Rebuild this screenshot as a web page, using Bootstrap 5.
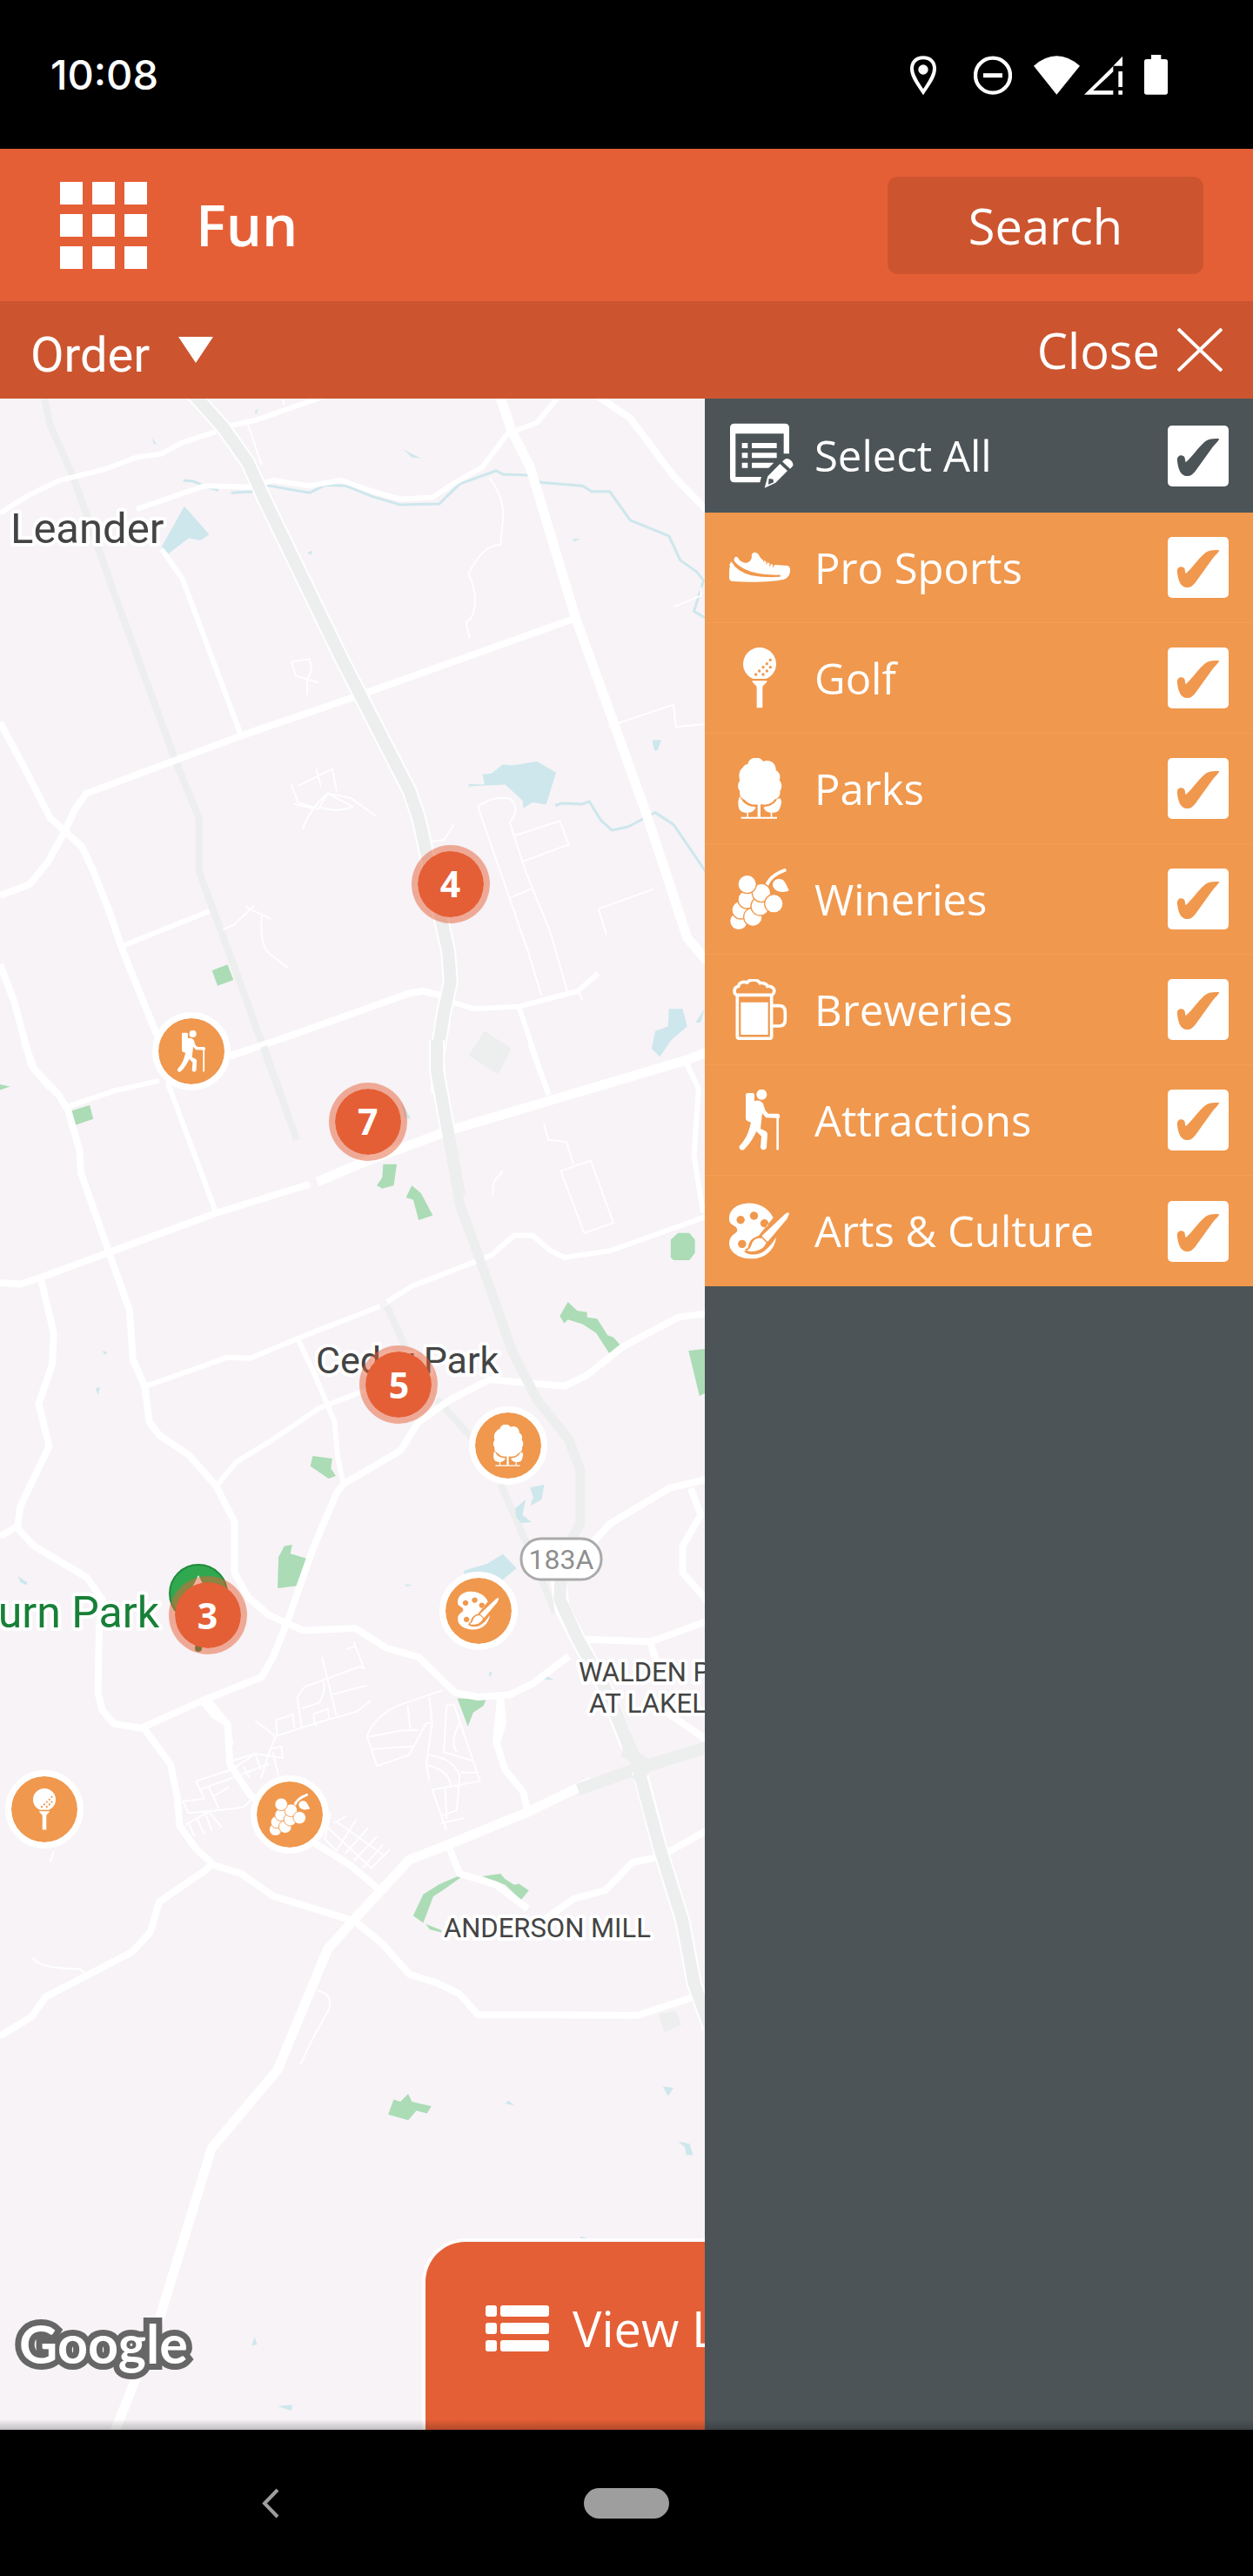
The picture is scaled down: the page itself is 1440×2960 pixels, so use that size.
<!DOCTYPE html>
<html lang="en">
<head>
<meta charset="utf-8">
<meta name="viewport" content="width=device-width, initial-scale=1">
<title>Fun</title>
<link href="https://cdn.jsdelivr.net/npm/bootstrap@5.3.0/dist/css/bootstrap.min.css" rel="stylesheet">
<style>
  :root { --brand:#e55f36; --brand-dark:#cc552f; --slate:#4c5457; --amber:#f0984d; }
  body { font-family:"Open Sans","Noto Sans",sans-serif; background:#000; color:#fff; }
  .status-bar { height:171px; padding:0 98px 0 58px; }
  .clock { font:500 47px/1 Inter,Roboto,sans-serif; }
  .app-bar { height:175px; background:var(--brand); padding:0 57px 0 69px; }
  .app-title { font-size:65px; font-weight:600; line-height:1; }
  .plain-btn { background:none; border:0; padding:0; color:inherit; line-height:1; }
  .search-btn { width:363px; height:112px; background:var(--brand-dark); color:#fff; font-size:56px; line-height:1; border:0; border-radius:12px; }
  .search-btn:hover { background:#b94b28; color:#fff; }
  .sub-bar { height:112px; background:var(--brand-dark); padding:0 35px; font-size:56px; }
  .order-select { appearance:none; background:none; border:0; color:#fff; padding:14px 0 0; font:400 56px/1.2 Roboto,sans-serif; }
  .order-group { gap:32px; }
  .close-btn { gap:20px; }
  .main-area::after { content:""; position:absolute; left:0; right:0; bottom:0; height:12px; background:linear-gradient(transparent,rgba(0,0,0,.22)); pointer-events:none; }
  .map-pane { background:#f7f3f7; min-width:0; }
  .map-pane > svg { width:100%; height:100%; position:absolute; inset:0; }
  .roads path, .gray-roads path, .water-lines path { fill:none; stroke:#fff; stroke-linejoin:round; vector-effect:non-scaling-stroke; }
  .roads .r1 { stroke-width:11px; } .roads .r2 { stroke-width:8px; } .roads .r3 { stroke-width:6px; } .roads .r4 { stroke-width:2px; }
  .gray-roads path { stroke:#edeeee; stroke-width:8px; }
  .gray-roads .casing { stroke:#fff; stroke-width:18px; }
  .gray-roads .wide { stroke-width:14px; }
  .gray-roads .medium { stroke-width:11px; }
  .water-lines path { stroke:#cde7ec; stroke-width:3px; }
  .green-area { fill:#abdcb5; } .water-area { fill:#cde7ec; } .gray-area { fill:#edeeee; }
  .map-label { font-family:Roboto,sans-serif; fill:#444; stroke:#fff; stroke-width:8px; stroke-linejoin:round; paint-order:stroke; }
  .t-town { font-size:49px; } .t-city { font-size:43px; } .t-area { font-size:31px; }
  .t-park { font-size:50px; fill:#188038; }
  .t-route { font-family:Roboto,sans-serif; font-size:32px; fill:#8f8f8f; }
  .t-logo { font:700 61px Lato,sans-serif; fill:#fff; stroke:#666; stroke-width:14px; paint-order:stroke; }
  .pin { position:absolute; width:90px; height:90px; border-radius:50%; border:7px solid #fff; background:var(--amber) padding-box; color:#fff; padding:0; transform:translate(-50%,-50%); display:flex; align-items:center; justify-content:center; }
  .pin svg { width:48px; height:48px; }
  .pin-group { border-color:rgba(229,95,54,.5); background:var(--brand) padding-box; font-size:41px; font-weight:700; line-height:1; }
  .view-btn { position:absolute; left:485px; bottom:0; width:470px; height:220px; border:4px solid #fff; border-bottom:0; border-radius:50px 50px 0 0; background:var(--brand); color:#fff; font-size:56px; line-height:1; padding:0 0 18px 69px; gap:27px; white-space:nowrap; }
  .filter-panel { width:43.75%; background:var(--slate); }
  .filter-row { height:127px; padding:0 28px; gap:28px; font-size:49px; line-height:1; background:var(--amber); color:#fff; border:0; border-bottom:2px solid #f39f57; border-radius:0; }
  .filter-row:last-child { border-bottom-color:var(--amber); }
  .filter-all { height:131px; background:var(--slate); border:0; }
  .filter-row svg { width:70px; height:70px; overflow:visible; flex:none; }
  .filter-row .form-check-input { width:70px; height:70px; margin:0 0 0 auto; float:none; border:0; border-radius:5px; background-color:#fff; background-size:70px; flex:none; }
  .filter-row .form-check-input:checked { background-color:#fff; background-image:url("data:image/svg+xml,%3Csvg xmlns='http://www.w3.org/2000/svg' viewBox='0 0 70 70'%3E%3Cpath fill='%23f0984d' d='M11 41C10 36 14 33 18 35C21 37 19 40 21 42C28 36 38 21 45 17C49 15 54 15 59 15C59 18 54 21 50 27L32 52C28 57 26 58 22 58C15 58 12 50 11 41Z'/%3E%3C/svg%3E"); }
  .filter-all .form-check-input:checked { background-image:url("data:image/svg+xml,%3Csvg xmlns='http://www.w3.org/2000/svg' viewBox='0 0 70 70'%3E%3Cpath fill='%234c5457' d='M11 41C10 36 14 33 18 35C21 37 19 40 21 42C28 36 38 21 45 17C49 15 54 15 59 15C59 18 54 21 50 27L32 52C28 57 26 58 22 58C15 58 12 50 11 41Z'/%3E%3C/svg%3E"); }
  .nav-keys { height:168px; padding:0 106px; }
  .home-pill { width:98px; height:35px; border-radius:18px; background:#9e9e9e; }
</style>
<script src="https://cdn.jsdelivr.net/npm/bootstrap@5.3.0/dist/js/bootstrap.bundle.min.js"></script>
</head>
<body class="d-flex flex-column min-vh-100">

<!-- Category icons -->
<svg class="d-none" aria-hidden="true">
  <symbol id="i-shoe" viewBox="54 442 210 210">
    <path fill="#fff" d="M55 541C56 534 59 530 64 527C72 545 92 562 128 570C160 577 200 579 232 577C205 585 150 582 115 571C85 562 68 548 60 540ZM74 512C79 508 85 513 88 519C92 525 104 532 115 531C124 529 130 522 132 511C129 501 136 494 144 495C154 497 158 508 165 517L172 522L170 530L175 524L182 527L181 539L187 530L193 533L193 546L199 535L204 537L205 549L210 538L255 541C263 543 265 551 264 562C261 577 254 585 240 589C205 597 130 600 62 594C53 592 53 580 54 568C55 555 54 545 60 536C80 558 110 573 150 577C190 581 215 581 232 575C200 572 160 571 128 561C100 552 75 535 70 521Z"/>
    <path d="M66 527C78 550 100 564 132 571C165 577 200 578 230 576" stroke="#f0984d" stroke-width="7" fill="none"/>
  </symbol>
  <symbol id="i-golf" viewBox="54 823 210 210">
    <path fill="#fff" d="M137 931C116 923 102 903 102 880A57 57 0 0 1 216 880C216 903 202 923 181 931ZM133 938H185C184 947 169 952 169 962V1031H149V962C149 952 134 947 133 938Z"/>
    <g fill="#f0984d"><circle cx="196" cy="866" r="5"/><circle cx="184" cy="879" r="5"/><circle cx="171" cy="891" r="5"/><circle cx="158" cy="904" r="5"/><circle cx="146" cy="916" r="5"/><circle cx="196" cy="891" r="5"/><circle cx="184" cy="904" r="5"/><circle cx="171" cy="916" r="5"/></g>
  </symbol>
  <symbol id="i-tree" viewBox="54 1204 210 210">
    <path fill="#fff" d="M118 1225C122 1198 160 1196 171 1216C190 1206 217 1219 215 1246C229 1254 232 1268 227 1280C237 1292 237 1308 229 1318C232 1334 222 1345 210 1347C203 1360 187 1366 162 1364V1407H219V1413H95V1407H152V1364C133 1367 117 1360 108 1348C94 1344 88 1330 91 1318C82 1308 82 1292 91 1282C84 1262 91 1243 101 1237C104 1230 110 1227 118 1225ZM91 1336C98 1353 108 1363 122 1368C130 1372 141 1370 146 1374C142 1384 133 1391 120 1392V1408H115V1392C98 1393 88 1384 87 1374C83 1361 85 1346 91 1336ZM229 1343C237 1350 234 1362 230 1372C229 1386 216 1394 202 1392V1408H197V1392C184 1391 175 1384 173 1374C181 1369 190 1372 199 1366C212 1360 218 1350 218 1346Z"/>
  </symbol>
  <symbol id="i-grapes" viewBox="54 85 210 210">
    <path d="M181 150C187 126 210 104 245 91" stroke="#fff" stroke-width="12" stroke-linecap="round" fill="none"/>
    <path fill="#fff" d="M204 139C207 122 227 117 240 125C248 133 255 148 260 161C247 168 225 168 213 158C207 153 204 146 204 139Z"/>
    <g fill="#fff" stroke="#f0984d" stroke-width="4"><circle cx="87" cy="266" r="31"/><circle cx="94" cy="228" r="31"/><circle cx="115" cy="192" r="31"/><circle cx="136" cy="252" r="32"/><circle cx="161" cy="215" r="32"/><circle cx="165" cy="169" r="32"/><circle cx="116" cy="139" r="32"/><circle cx="208" cy="206" r="32"/></g>
  </symbol>
  <symbol id="i-beer" viewBox="54 466 210 210">
    <path d="M82 522V663Q82 671 90 671H192Q200 671 200 663V522M82 521H200M82 522C68 517 68 495 86 491C88 478 102 473 116 478C124 466 152 465 160 480C172 478 184 483 186 491C204 489 216 504 205 518L200 523M204 558H226Q247 558 247 580V607Q247 628 226 628H204" fill="none" stroke="#fff" stroke-width="11"/>
    <path d="M94 546H188V658H94Z" fill="#fff"/>
  </symbol>
  <symbol id="i-hiker" viewBox="54 847 210 210">
    <circle cx="166" cy="864" r="18" fill="#fff"/>
    <path fill="#fff" d="M117 859H136Q141 859 141 865V887C152 882 166 886 171 896L179 920L189 930H221C228 930 230 936 228 944L225 947V1053Q221 1058 217 1053V945L181 944L168 929L162 982L180 990Q186 994 186 1001L183 1046C182 1058 163 1058 162 1046L165 1008L148 991C138 1011 129 1030 106 1053C96 1061 84 1050 90 1041C110 1018 120 1000 129 960L116 955Q111 952 111 946V865Q111 859 117 859Z"/>
  </symbol>
  <symbol id="i-art" viewBox="54 1228 210 210">
    <path fill="#fff" fill-rule="evenodd" d="M206 1286C190 1252 155 1234 115 1236C77 1238 50 1262 54 1295C58 1315 82 1310 82 1331C78 1342 56 1345 54 1372C53 1402 86 1427 130 1427C177 1428 210 1398 216 1354C201 1375 187 1396 164 1407C143 1416 113 1413 105 1401C119 1400 119 1385 123 1374C129 1360 140 1353 155 1349ZM93 1279a14 14 0 1 0 1 0ZM139 1265a14 14 0 1 0 1 0ZM175 1291a14 14 0 1 0 1 0ZM98 1362a14 14 0 1 0 1 0Z"/>
    <path d="M165 1346L245 1271C252 1265 266 1263 263 1274L255 1292L190 1368L183 1375C174 1395 150 1408 123 1404C117 1404 110 1399 113 1395C128 1394 126 1378 133 1368C140 1357 151 1352 163 1354Z" fill="#fff" stroke="#f0984d" stroke-width="5"/>
    <path d="M161 1347L186 1372" stroke="#f0984d" stroke-width="5"/>
  </symbol>
</svg>

<header class="status-bar d-flex align-items-center flex-shrink-0">
  <span class="clock me-auto">10:08</span>
  <svg width="30" height="46" viewBox="78 66 90 138" style="margin-right:43px"><path d="M123 76C98 76 84 92 84 114C84 142 108 170 123 194C138 170 162 142 162 114C162 92 148 76 123 76Z" fill="none" stroke="#fff" stroke-width="12"/><circle cx="123" cy="117" r="17" fill="#fff"/></svg>
  <svg width="44" height="46" viewBox="297 66 132 138" style="margin-right:25px"><circle cx="363" cy="137" r="60" fill="none" stroke="#fff" stroke-width="13"/><path d="M330 137h66" stroke="#fff" stroke-width="15"/></svg>
  <svg width="53" height="46" viewBox="504 66 159 138" style="margin-right:5px"><path d="M504 104Q583 36 663 104L583 203Z" fill="#fff"/></svg>
  <svg width="44" height="46" viewBox="677 66 132 138" style="margin-right:25px"><path d="M809 71V104H777ZM777 105V124L708 189H777V203H677ZM795 123h14v54h-14ZM795 189h14v14h-14Z" fill="#fff"/></svg>
  <svg width="27" height="46" viewBox="885 66 81 138"><path d="M909 66h34v15h15q8 0 8 8v106q0 8-8 8h-65q-8 0-8-8V89q0-8 8-8h16Z" fill="#fff"/></svg>
</header>

<nav class="app-bar d-flex align-items-center flex-shrink-0">
  <button class="plain-btn" type="button" aria-label="Menu">
    <svg class="d-block" width="100" height="100" viewBox="0 0 100 100" fill="#fff"><path d="M0 0h26v26H0ZM37 0h26v26H37ZM74 0h26v26H74ZM0 37h26v26H0ZM37 37h26v26H37ZM74 37h26v26H74ZM0 74h26v26H0ZM37 74h26v26H37ZM74 74h26v26H74Z"/></svg>
  </button>
  <h1 class="app-title mb-0 ms-5 ps-2">Fun</h1>
  <button class="btn search-btn ms-auto" type="button">Search</button>
</nav>

<div class="sub-bar d-flex align-items-center justify-content-between flex-shrink-0">
  <div class="order-group d-flex align-items-center">
    <select class="order-select" aria-label="Order"><option>Order</option></select>
    <svg width="40" height="30" viewBox="0 0 40 30"><path d="M0 0H40L20 30Z" fill="#fff"/></svg>
  </div>
  <button class="plain-btn close-btn d-flex align-items-center" type="button">Close
    <svg width="52" height="50" viewBox="0 0 52 50"><path d="M1 1L51 49M51 1L1 49" stroke="#fff" stroke-width="4"/></svg>
  </button>
</div>

<main class="main-area d-flex flex-grow-1 position-relative">
  <section class="map-pane flex-grow-1 position-relative overflow-hidden" aria-label="Map">
    <svg viewBox="0 0 810 2334" preserveAspectRatio="xMidYMid slice">
      <!-- northern tile -->
      <g transform="translate(0,-8) scale(.523,.5102)">
        <g class="gray-roads"><path d="M95 0L110 75L160 190L260 480L385 830L437 960V1080L520 1310L615 1580"/></g>
        <path class="water-area" d="M405 258L460 322L440 335L415 330L370 365L355 350ZM1030 889V884L1065 885L1060 862L1080 860L1105 840L1125 842L1180 833L1222 858L1200 930L1170 925L1150 938L1148 920L1110 885ZM1470 1390H1500L1510 1430L1475 1460L1450 1498L1432 1480L1440 1440L1468 1430ZM885 128L900 138L925 150L905 148ZM1433 785H1453L1445 808H1438ZM1258 332L1275 331L1262 338ZM335 105L345 120L337 115ZM560 45L567 38L563 52ZM675 363L685 358V368ZM1548 1390L1528 1422L1540 1420Z"/>
        <g class="water-lines"><path d="M403 200L425 202L455 215L480 222M508 228L560 225L580 210L680 228L715 210L760 212L820 237L880 255L965 253L1010 208L1090 178L1105 186L1160 188L1190 205L1280 212L1300 225H1340L1385 290L1470 325L1495 380L1530 405L1546 425L1525 495L1560 516M1220 932L1235 927L1280 929L1295 923L1320 965L1345 988L1380 980L1440 948L1480 975L1560 1095"/></g>
        <path class="green-area" d="M466 1304L500 1290L513 1325L478 1338Z"/>
        <path class="gray-area" d="M1065 1440L1123 1480L1095 1538L1030 1495Z"/>
        <g class="roads">
          <path class="r3" d="M0 274L60 235L130 200L230 175L300 148L355 140L400 115L475 90M500 78L560 65L720 8"/>
          <path class="r3" d="M300 265L450 212L550 215L600 200L680 212L750 200L820 225L880 242L950 238L1000 205L1060 170L1115 95L1180 70L1230 8"/>
          <path class="r3" d="M355 355L400 420L530 775M270 1248L460 1170"/>
          <path class="r1" d="M1095 0L1125 90L1165 170L1265 510L1350 750L1420 950L1510 1230L1560 1290"/>
          <path class="r2" d="M1310 8L1385 60L1480 190L1560 275"/>
          <path class="r2" d="M1265 510L800 680L530 775L190 905L165 940L140 995L105 1060L65 1110L0 1135M0 745L50 840L110 960L180 1025L205 1080L240 1170L270 1260L345 1450"/>
          <path class="r2" d="M0 1290L30 1370L70 1520L110 1568M505 1497L640 1450L790 1395L900 1355L930 1350L970 1360"/>
          <path class="r3" d="M995 1375L1040 1390L1140 1385L1270 1350L1315 1310M1140 1385L1205 1585"/>
          <path class="r4" d="M540 60L575 165M620 15L625 30M1075 195Q1110 240 1105 290L1100 345Q1060 345 1030 410Q1055 470 1035 510L1024 520L1032 555M640 608L680 602L685 625L675 650V683M640 608L650 640L700 655M1335 755L1480 705L1485 755L1560 748M1480 485L1540 460V440M640 885L655 925L700 940L720 905L770 915L825 955M655 888L730 850L740 900M695 848L705 890M665 985Q680 940 720 905M700 935Q740 950 775 935L720 905M645 928L690 940M1190 1360L1160 1260L1050 935Q1080 910 1120 916Q1145 940 1120 970L1155 1080L1210 1220L1248 1355M1130 1000L1230 967L1250 1020L1150 1058M1120 1140L1168 1120M1315 1165L1437 1120M1315 1165L1333 1224M945 1013L975 1010L998 975M490 1212L515 1200L558 1158M540 1160L595 1188M575 1180Q570 1250 595 1268L633 1298M1270 1350L1280 1370"/>
        </g>
        <g class="gray-roads">
          <path class="casing" d="M420 0L490 80L545 160L580 240L750 600L900 900L920 960L935 1030L985 1260L990 1330L975 1400L960 1500L965 1580"/>
          <path class="wide" d="M420 0L490 80L545 160L580 240L750 600L900 900L920 960L935 1030L985 1260L990 1330L975 1400L960 1500L965 1580"/>
        </g>
      </g>
      <!-- central tile -->
      <g transform="translate(0,742) scale(.523,.5102)">
        <g class="gray-roads"><path d="M578 0L652 215M850 590L890 680M960 800L1040 890M1100 990L1160 1130L1220 1280"/></g>
        <path class="green-area" d="M150 152L197 137L205 168L163 183ZM0 90L22 95L0 103ZM842 270H872L865 318L840 325L828 318L840 300ZM905 318L925 335L951 385L920 396L908 350L892 345ZM1490 425H1515L1527 440V470L1515 486H1480L1474 480V440ZM1248 580L1268 600L1290 603V615L1312 618L1335 655L1348 660L1367 682L1340 698L1310 650L1280 630L1248 620L1240 628L1230 612ZM1513 690L1560 685V780L1537 792ZM687 927L730 933L727 955L738 972L722 978L682 950ZM625 1130L642 1127L638 1147L680 1160L662 1218L610 1225L612 1155ZM1005 1473L1068 1476L1062 1490L1040 1505L1028 1536Z"/>
        <path class="water-area" d="M1165 998L1196 992L1190 1025L1165 1040L1172 1020ZM1132 1045L1155 1025L1148 1060L1168 1076L1145 1078L1134 1065ZM1020 1185L1070 1170L1105 1148L1135 1180L1100 1210L1020 1200ZM40 1198L60 1212L58 1218L45 1212ZM1075 1412L1082 1416L1075 1426ZM1195 1420L1218 1432L1190 1430ZM225 690L236 694L230 699ZM210 775L220 772L215 790ZM888 1216L905 1217L895 1221ZM880 125L903 168L890 165Z"/>
        <g class="roads">
          <path class="r2" d="M53 -5L75 55L130 115L150 150L175 240L178 290L240 470L285 600L292 710L318 770L328 850L350 880L415 925L475 995L515 1075V1190L545 1245L590 1285L665 1320L780 1315L850 1360L920 1380L1000 1460L1050 1470L1120 1465L1170 1440L1250 1378"/>
          <path class="r3" d="M150 140L250 105L350 82M368 85L475 380M505 24L600 -8"/>
          <path class="r2" d="M0 537L45 540L90 525L475 380L680 315"/>
          <path class="r1" d="M697 310L800 265L1000 190L1510 35L1560 15"/>
          <path class="r2" d="M90 530L118 650L115 720L85 810L108 905L45 1040L38 1090L75 1130L190 1200L225 1250L218 1310L215 1460L225 1500L250 1530L310 1540L445 1478L575 1425L600 1380L635 1290L690 1130L740 1010L755 990L880 915L920 850L990 800L1075 755L1240 770L1290 745L1370 680L1490 615L1560 605M0 1108L40 1085"/>
          <path class="r3" d="M320 770L500 705L550 707L660 660L835 590M850 580L905 545L1080 475L1130 430H1170L1210 465L1240 480L1340 465L1560 385M655 665L690 740L735 850L742 930L755 990M475 995L520 940L600 890L700 820L800 780M1165 0L1205 110M1505 35L1535 100L1525 250L1545 380"/>
          <path class="r2" d="M1300 1125L1340 1080L1470 1000L1560 978M1518 1000L1540 1060L1500 1130V1190L1560 1260M1285 1340L1430 1345L1560 1297M1430 1350L1445 1400M1100 1470L1105 1530L1090 1580M445 1478L470 1510L500 1530L505 1580"/>
          <path class="r4" d="M1195 180L1205 215L1245 220L1260 270M1232 285L1298 262L1348 402L1284 425ZM1105 285L1085 310L1082 340"/>
        </g>
        <g class="gray-roads">
          <path class="casing" d="M960 -10V60L985 200"/>
          <path class="wide" d="M960 -10V60L985 200L1010 340"/>
          <path class="casing" d="M1225 1190L1235 1270L1270 1340L1330 1450L1380 1580"/>
          <path class="medium" d="M985 200L1010 360L1060 500L1125 690L1180 800L1250 890L1275 960L1275 1080L1235 1150L1230 1250"/>
          <path class="wide" d="M1235 1140L1230 1250L1270 1340L1330 1450L1385 1590"/>
        </g>
      </g>
      <!-- southern tile -->
      <g transform="translate(0,1492) scale(.523,.6441)">
        <path class="green-area" d="M1012 318L965 334L930 352L908 390L930 403L952 356L978 342L1012 322ZM935 405L970 416V420L945 415ZM1060 320L1100 315L1110 325L1130 335L1140 333L1162 345L1145 362L1110 335ZM853 745L865 718L880 722L897 708L905 722L948 730L938 743L915 738L897 755Z"/>
        <path class="gray-area" d="M1448 565L1485 560L1497 585L1460 598Z"/>
        <path class="water-area" d="M1457 695L1480 697L1468 712ZM1490 793L1515 797L1523 817H1508L1505 803ZM1110 725L1118 720L1130 729ZM553 1157L560 1142L565 1155ZM610 1265L642 1263L640 1273ZM1275 962L1292 966H1275Z"/>
        <g class="roads">
          <path class="r2" d="M310 50L320 60L375 120L390 180L395 230L430 270L470 300L530 315L600 355L780 400L840 440L900 495L960 510L1010 530L1050 567H1200L1400 568L1525 535"/>
          <path class="r2" d="M452 0L500 50L505 120L550 175L700 265L770 300L835 345M0 605L70 570L100 535L290 455L330 420L350 365L450 310L468 295M1100 0L1090 80L1110 130L1150 170L1160 205M985 265L1010 315L1090 335L1160 378M1200 395L1260 360L1330 345L1390 295L1450 285L1560 235M1460 25L1560 80"/>
          <path class="r1" d="M1300 150L1160 205L980 265L900 290L780 395L720 450L610 665L465 805L350 1110L250 1315"/>
          <path class="r4" d="M72 465Q85 485 175 485L190 495M695 523Q735 530 722 558L690 605L660 655M118 275L110 295"/>
        </g>
        <g class="gray-roads">
          <path class="wide" d="M1270 165L1400 128L1560 88"/>
          <path class="casing" d="M1405 130L1450 270L1500 400L1525 510L1560 590"/>
          <path class="wide" d="M1340 0L1400 120L1450 270L1500 400L1525 510L1560 590M1370 95L1420 120L1400 150"/>
        </g>
      </g>
      <!-- residential streets -->
      <g transform="translate(180,1322) scale(.3333)"><g class="roads">
        <path class="r4" d="M340 592L410 645L550 600L690 560L740 522M410 645L385 710L360 790M415 640L412 590L470 570L475 615M500 615L485 510L510 475L700 405L715 412L680 320M655 345L685 335M570 372L620 572M500 550L560 530Q585 490 575 455M610 500L725 470M540 575L550 612M540 570L590 550L595 585"/>
        <path class="r4" d="M985 487L860 530Q760 560 725 645L760 748L870 710L930 600H945M725 648L850 625H905M740 690L885 680M865 540L875 620M940 510L950 600L930 740L940 800M1000 540L1025 535L1115 800L950 830L1000 970M1000 540L990 700L1090 730M1045 600Q1010 660 1035 700M940 710Q1020 720 1045 780L1035 900L980 920M930 745Q1010 760 1015 820M1050 770H1105M995 820L1000 930M980 945L1060 928"/>
        <path class="r4" d="M135 800L260 760L340 705L435 720L430 680L390 690M135 800L165 860L90 870L110 910L215 900L300 890L340 850M145 830L230 800L390 740M180 820L215 895M260 730L340 705L360 760M100 950L180 905L225 960M110 945L130 990M140 930L165 985M170 915L190 970M200 850L250 820M400 700L420 780M300 750L320 790"/>
        <path class="r4" d="M600 910L580 1000L620 1040L690 930M590 960L740 1100L805 1035M620 940L790 1060M650 1050L730 960M680 1075L760 990M710 1100L780 1020M655 920L610 945"/>
      </g></g>

      <text class="map-label t-town" x="12" y="166">Leander</text>
      <text class="map-label t-city" x="363" y="1120">Cedar Park</text>
      <text class="map-label t-park" x="183" y="1412" text-anchor="end">Milburn Park</text>
      <text class="map-label t-area" x="665" y="1474">WALDEN PARK</text>
      <text class="map-label t-area" x="677" y="1510">AT LAKELINE</text>
      <text class="map-label t-area" x="510" y="1768">ANDERSON MILL</text>
      <rect x="599" y="1310" width="92" height="47" rx="23" fill="#fff" stroke="#aaa" stroke-width="3"/>
      <text class="t-route" x="645" y="1345" text-anchor="middle">183A</text>
      <circle cx="228" cy="1373" r="33" fill="#30a84f" stroke="#1f8a3c" stroke-width="2"/>
      <path d="M228 1352L238 1372H218Z" fill="#fff"/>
      <circle cx="228" cy="1436" r="4" fill="#188038"/>
      <text class="t-logo" x="22" y="2258">Google</text>
    </svg>

    <button type="button" class="pin pin-group" style="left:63.9%;top:23.9%">4</button>
    <button type="button" class="pin pin-group" style="left:52.2%;top:35.6%">7</button>
    <button type="button" class="pin pin-group" style="left:56.6%;top:48.55%">5</button>
    <button type="button" class="pin pin-group" style="left:29.45%;top:59.9%">3</button>
    <button type="button" class="pin" style="left:27.2%;top:32.15%" aria-label="Attractions"><svg><use href="#i-hiker"/></svg></button>
    <button type="button" class="pin" style="left:72.15%;top:51.55%" aria-label="Parks"><svg><use href="#i-tree"/></svg></button>
    <button type="button" class="pin" style="left:67.85%;top:59.7%" aria-label="Arts &amp; Culture"><svg><use href="#i-art"/></svg></button>
    <button type="button" class="pin" style="left:6.3%;top:69.45%" aria-label="Golf"><svg><use href="#i-golf"/></svg></button>
    <button type="button" class="pin" style="left:41.05%;top:69.7%" aria-label="Wineries"><svg><use href="#i-grapes"/></svg></button>

    <button type="button" class="view-btn d-flex align-items-center">
      <svg width="73" height="53" viewBox="0 0 73 53" fill="#fff"><rect width="13" height="13" rx="3"/><rect x="17" width="56" height="13" rx="3"/><rect y="20" width="13" height="13" rx="3"/><rect x="17" y="20" width="56" height="13" rx="3"/><rect y="40" width="13" height="13" rx="3"/><rect x="17" y="40" width="56" height="13" rx="3"/></svg>
      View List
    </button>
  </section>

  <aside class="filter-panel flex-shrink-0">
    <div class="list-group list-group-flush">
      <label class="list-group-item filter-row filter-all d-flex align-items-center">
        <svg viewBox="54 55 210 210"><path d="M242 152V83H76V232H165L160 251H72Q57 251 57 236V63Q57 48 72 48H246Q261 48 261 63V152Z" fill="#fff"/><path d="M98 115h20v18H98ZM132 115h86v18h-86ZM98 149h20v18H98ZM132 149h86v18h-86ZM98 183h20v18H98ZM132 183h76l-18 18h-58Z" fill="#fff"/><path d="M176 270L187 230L229 187L255 211L214 252ZM237 179L246 171C258 163 278 180 274 194L264 204Z" fill="#fff"/><path d="M191 238L206 240L207 251L189 258Z" fill="#4c5457"/></svg>
        <span>Select All</span><input class="form-check-input" type="checkbox" checked>
      </label>
      <label class="list-group-item filter-row d-flex align-items-center"><svg><use href="#i-shoe"/></svg><span>Pro Sports</span><input class="form-check-input" type="checkbox" checked></label>
      <label class="list-group-item filter-row d-flex align-items-center"><svg><use href="#i-golf"/></svg><span>Golf</span><input class="form-check-input" type="checkbox" checked></label>
      <label class="list-group-item filter-row d-flex align-items-center"><svg><use href="#i-tree"/></svg><span>Parks</span><input class="form-check-input" type="checkbox" checked></label>
      <label class="list-group-item filter-row d-flex align-items-center"><svg><use href="#i-grapes"/></svg><span>Wineries</span><input class="form-check-input" type="checkbox" checked></label>
      <label class="list-group-item filter-row d-flex align-items-center"><svg><use href="#i-beer"/></svg><span>Breweries</span><input class="form-check-input" type="checkbox" checked></label>
      <label class="list-group-item filter-row d-flex align-items-center"><svg><use href="#i-hiker"/></svg><span>Attractions</span><input class="form-check-input" type="checkbox" checked></label>
      <label class="list-group-item filter-row d-flex align-items-center"><svg><use href="#i-art"/></svg><span>Arts &amp; Culture</span><input class="form-check-input" type="checkbox" checked></label>
    </div>
  </aside>
</main>

<footer class="nav-keys d-flex align-items-center flex-shrink-0">
  <div class="w-100 d-flex justify-content-center"><button class="plain-btn" type="button" aria-label="Back"><svg class="d-block" width="20" height="35" viewBox="0 0 20 35"><path d="M18 2L3 17.5L18 33" fill="none" stroke="#9e9e9e" stroke-width="4"/></svg></button></div>
  <div class="w-100 d-flex justify-content-center"><button class="plain-btn home-pill" type="button" aria-label="Home"></button></div>
  <div class="w-100"></div>
</footer>
</body>
</html>
